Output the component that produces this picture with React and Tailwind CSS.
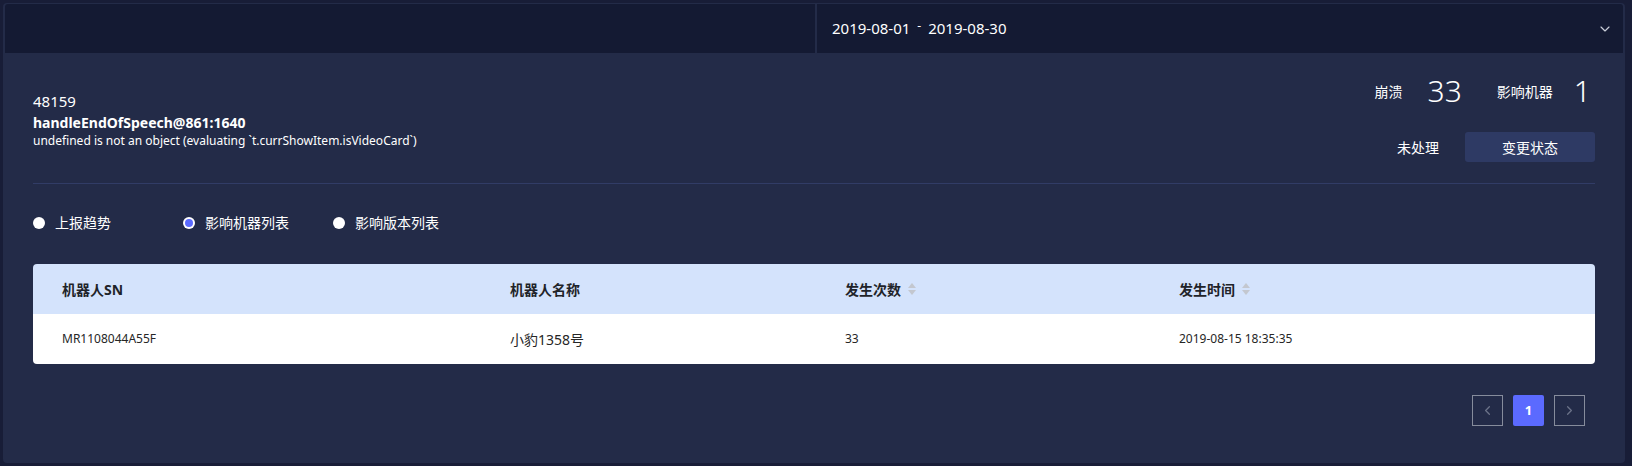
import { ChevronDown, ChevronLeft, ChevronRight } from "lucide-react";

const FONT = { fontFamily: '"Noto Sans", "Noto Sans CJK SC", sans-serif' };

function SortIcon() {
  return (
    <span className="ml-[7px] inline-flex flex-col gap-[2px]">
      <svg width="8" height="5" viewBox="0 0 8 5">
        <path d="M4 0 L8 5 L0 5 Z" fill="#c3c7cf" />
      </svg>
      <svg width="8" height="5" viewBox="0 0 8 5">
        <path d="M0 0 L8 0 L4 5 Z" fill="#c3c7cf" />
      </svg>
    </span>
  );
}

function Radio({ label, checked }) {
  return (
    <label className="w-[150px] flex items-center">
      {checked ? (
        <span className="w-[12px] h-[12px] rounded-full bg-white flex items-center justify-center">
          <span className="w-[8px] h-[8px] rounded-full bg-[#5b6aff]" />
        </span>
      ) : (
        <span className="w-[12px] h-[12px] rounded-full bg-white" />
      )}
      <span className="ml-[10px] text-[14px] leading-[20px] text-white">{label}</span>
    </label>
  );
}

const rows = [
  { sn: "MR1108044A55F", name: "小豹1358号", count: "33", time: "2019-08-15 18:35:35" },
];

export default function App() {
  return (
    <div style={FONT} className="w-[1632px] h-[466px] bg-[#181d37] pt-[3px] pl-[3px] pr-[7px] pb-[3px]">
      <div className="h-full rounded-[4px] bg-[#232b48] flex flex-col">
        {/* date range header */}
        <div className="mx-[2px] mt-[1px] h-[49px] flex">
          <div className="w-[810px] bg-[#141a33] rounded-tl-[3px]" />
          <div className="w-[2px] bg-[#232b48]" />
          <div className="flex-1 bg-[#141a33] rounded-tr-[3px] pl-[15px] pr-[10px] flex items-center justify-between">
            <span className="text-[15px] text-white flex items-center">
              2019-08-01
              <span className="mx-[7px] text-[12px] -mt-[6px]">-</span>
              2019-08-30
            </span>
            <ChevronDown size={16} strokeWidth={1.75} className="text-[#c9cdd8]" />
          </div>
        </div>

        <div className="px-[30px] flex flex-col">
          {/* issue summary */}
          <div className="mt-[18px] flex justify-between">
            <div className="mt-[20px] text-white">
              <div className="text-[15px] leading-[20px]">48159</div>
              <div className="mt-[2px] text-[14px] leading-[20px] font-bold">handleEndOfSpeech@861:1640</div>
              <div className="text-[12px] leading-[16px]">
                undefined is not an object (evaluating `t.currShowItem.isVideoCard`)
              </div>
            </div>
            <div className="flex flex-col items-end">
              <div className="h-[40px] flex items-center text-white pr-[4px]">
                <span className="text-[14px]">崩溃</span>
                <span className="ml-[25px] text-[30px] font-light leading-none">33</span>
                <span className="ml-[35px] text-[14px]">影响机器</span>
                <span className="ml-[21px] text-[30px] font-light leading-none">1</span>
              </div>
              <div className="mt-[21px] flex items-center">
                <span className="text-[14px] text-white">未处理</span>
                <button className="ml-[26px] w-[130px] h-[30px] rounded-[3px] bg-[#2e3a64] text-[14px] text-white">
                  变更状态
                </button>
              </div>
            </div>
          </div>

          <div className="mt-[21px] h-px bg-[#313c66]" />

          {/* view switch */}
          <div className="mt-[29px] h-[20px] flex items-center">
            <Radio label="上报趋势" />
            <Radio label="影响机器列表" checked />
            <Radio label="影响版本列表" />
          </div>

          {/* table */}
          <div className="mt-[31px] rounded-[4px] overflow-hidden">
            <div className="h-[50px] bg-[#d4e3fc] grid grid-cols-[448px_335px_334px_1fr] items-center text-[14px] font-bold text-[#1f2329]">
              <div className="pl-[29px]">机器人SN</div>
              <div className="pl-[29px]">机器人名称</div>
              <div className="pl-[29px] flex items-center">
                发生次数
                <SortIcon />
              </div>
              <div className="pl-[29px] flex items-center">
                发生时间
                <SortIcon />
              </div>
            </div>
            {rows.map((r) => (
              <div
                key={r.sn}
                className="h-[50px] bg-white grid grid-cols-[448px_335px_334px_1fr] items-center text-[12px] text-[#262626]"
              >
                <div className="pl-[29px]">{r.sn}</div>
                <div className="pl-[29px] text-[14px]">{r.name}</div>
                <div className="pl-[29px]">{r.count}</div>
                <div className="pl-[29px]">{r.time}</div>
              </div>
            ))}
          </div>

          {/* pagination */}
          <div className="mt-[31px] mr-[10px] flex justify-end gap-[10px]">
            <button className="w-[31px] h-[31px] border border-[#868c9c] flex items-center justify-center">
              <ChevronLeft size={15} className="text-[#6c7389]" />
            </button>
            <button className="w-[31px] h-[31px] rounded-[2px] bg-[#5b6aff] text-white text-[13px] font-bold">
              1
            </button>
            <button className="w-[31px] h-[31px] border border-[#868c9c] flex items-center justify-center">
              <ChevronRight size={15} className="text-[#6c7389]" />
            </button>
          </div>
        </div>
      </div>
    </div>
  );
}
